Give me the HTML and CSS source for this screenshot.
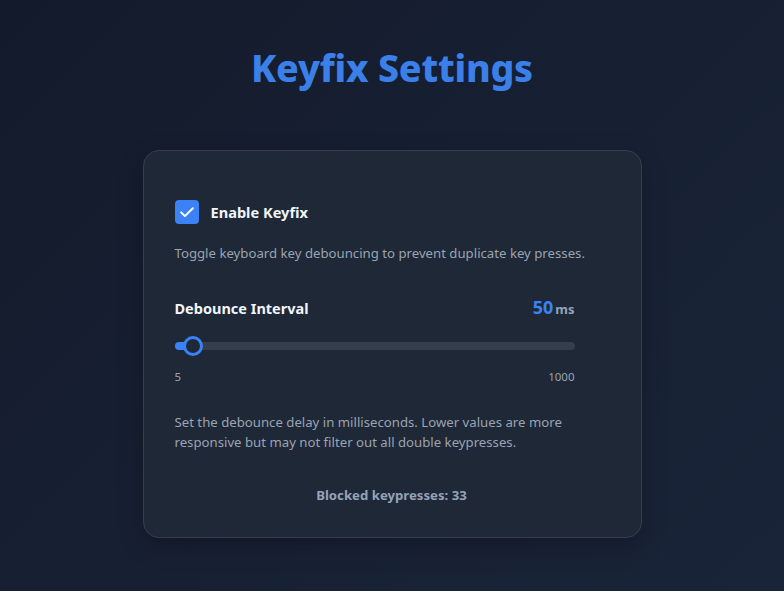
FILE: index.html
```html
<!DOCTYPE html>
<html>
<head>
<meta charset="utf-8">
<link rel="stylesheet" href="styles.css">
</head>
<body>
<main class="page">
  <h1 class="title">Keyfix Settings</h1>
  <section class="card">
    <label class="check-row">
      <span class="checkbox">
        <svg viewBox="0 0 24 24" width="20" height="20"><path d="M5 12.5l4.5 4.5L19 7.5" fill="none" stroke="#fff" stroke-width="2.4" stroke-linecap="round" stroke-linejoin="round"/></svg>
      </span>
      <span class="check-label">Enable Keyfix</span>
    </label>
    <p class="desc">Toggle keyboard key debouncing to prevent duplicate key presses.</p>

    <div class="interval">
      <div class="interval-head">
        <span class="interval-label">Debounce Interval</span>
        <span class="value"><span class="num">50</span><span class="unit">ms</span></span>
      </div>
      <div class="slider">
        <div class="track"><div class="fill" style="width: 18px"></div></div>
        <div class="thumb"></div>
      </div>
      <div class="range-labels"><span>5</span><span>1000</span></div>
    </div>
    <p class="help">Set the debounce delay in milliseconds. Lower values are more responsive but may not filter out all double keypresses.</p>
    <p class="blocked">Blocked keypresses: 33</p>
  </section>
</main>
</body>
</html>
```
FILE: styles.css
```css
* { box-sizing: border-box; }
html, body { margin: 0; height: 100%; }
body {
  font-family: "Noto Sans", "Open Sans", sans-serif;
  background: linear-gradient(135deg, #131a2b 0%, #172033 50%, #1a2438 100%);
  color: #e5e7eb;
  overflow: hidden;
}
.page {
  display: flex;
  flex-direction: column;
  align-items: center;
  padding-top: 44px;
}
.title {
  margin: 0;
  font-size: 37.5px;
  font-weight: 800;
  color: #3b7fe9;
  line-height: 48px;
  letter-spacing: -0.2px;
}
.card {
  margin-top: 58px;
  width: 499px;
  background: #1e2837;
  border: 1px solid #333f50;
  border-radius: 16px;
  padding: 49px 32px 33px 31px;
  box-shadow: 0 8px 24px rgba(0,0,0,0.25);
}
.interval {
  width: 400px;
}
.check-row {
  display: flex;
  align-items: center;
  gap: 12px;
}
.checkbox {
  width: 24px; height: 24px;
  border-radius: 4px;
  background: #3b82f6;
  display: flex; align-items: center; justify-content: center;
}
.check-label {
  font-size: 14.6px;
  font-weight: 700;
  color: #f1f5f9;
}
.desc {
  margin: 19px 0 0 0;
  font-size: 13.2px;
  line-height: 20px;
  color: #9aa4b2;
  white-space: nowrap;
}
.interval-head {
  margin-top: 32px;
  display: flex;
  justify-content: space-between;
  align-items: baseline;
}
.interval-label {
  font-size: 14.5px;
  font-weight: 700;
  color: #f1f5f9;
}
.value .num {
  font-size: 18px;
  font-weight: 700;
  color: #3b82f6;
}
.value .unit {
  font-size: 13px;
  font-weight: 700;
  color: #94a3b8;
  margin-left: 2px;
}
.slider {
  position: relative;
  margin-top: 17px;
  height: 20px;
  display: flex;
  align-items: center;
}
.track {
  width: 100%;
  height: 8px;
  border-radius: 4px;
  background: #343e4d;
  overflow: hidden;
}
.fill {
  height: 100%;
  background: #3b82f6;
}
.thumb {
  position: absolute;
  left: 8px;
  top: 0;
  width: 20px;
  height: 20px;
  border-radius: 50%;
  background: #1e2837;
  border: 3px solid #3b82f6;
}
.range-labels {
  margin-top: 13px;
  display: flex;
  justify-content: space-between;
  font-size: 11.5px;
  color: #9aa4b2;
}
.help {
  margin: 28px 0 0 0;
  font-size: 13.2px;
  line-height: 20px;
  color: #9aa4b2;
}
.blocked {
  margin: 34px 0 0 0;
  text-align: center;
  font-size: 13.2px;
  font-weight: 700;
  color: #94a3b8;
}
```
